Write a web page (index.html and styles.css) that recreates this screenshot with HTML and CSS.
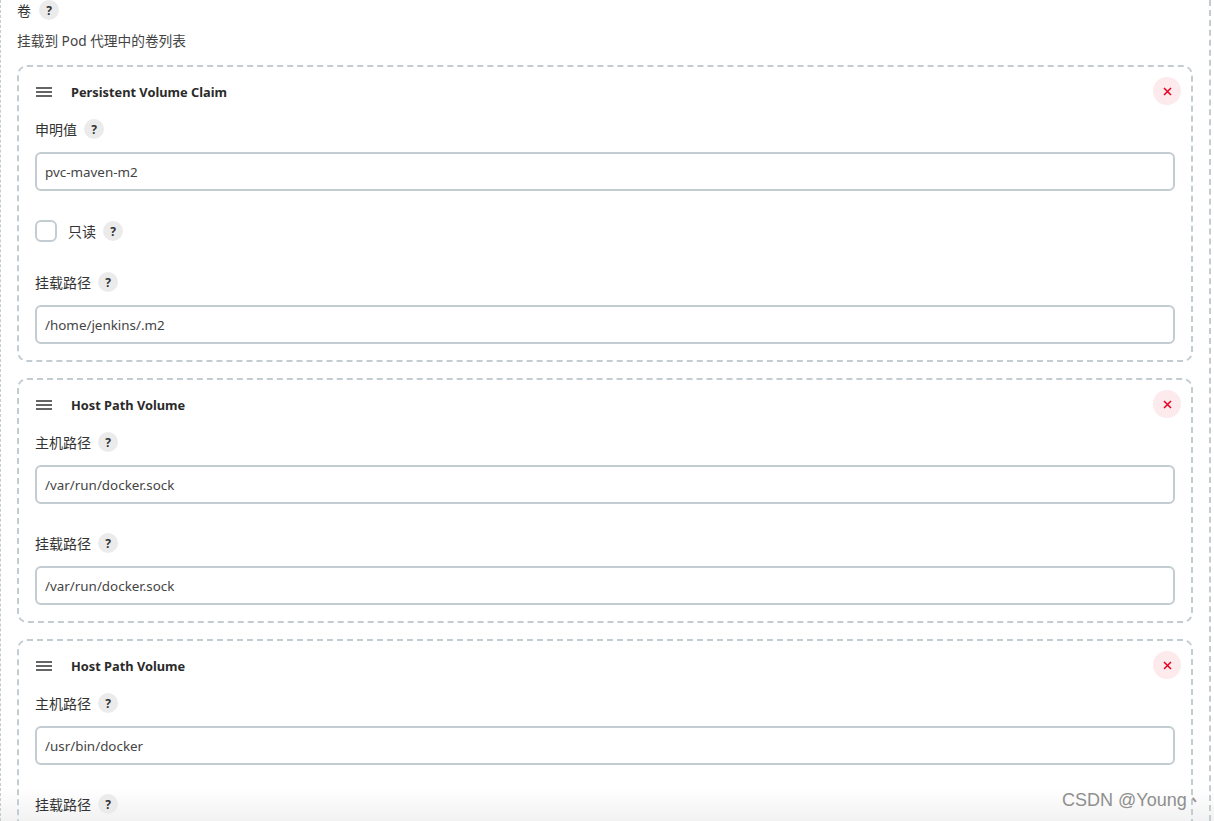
FILE: index.html
```html
<!DOCTYPE html>
<html>

<head>
    <meta charset="UTF-8">
    <title>卷</title>
    <link rel="stylesheet" href="styles.css">
</head>

<body>
    <div class="fade"></div>
    <div class="outer">
        <div class="label top_label">卷 <span class="help">?</span></div>
        <div class="desc">挂载到 Pod 代理中的卷列表</div>

        <div class="card">
            <div class="card_head">
                <svg class="grip" width="16" height="10" viewBox="0 0 16 10"><path d="M0 1h16M0 5h16M0 9h16" stroke="#333" stroke-width="1.4" fill="none"/></svg>
                <b>Persistent Volume Claim</b>
                <span class="close"><svg width="9" height="9" viewBox="0 0 9 9"><path d="M1 1l7 7M8 1l-7 7" stroke="#e6001f" stroke-width="1.5" fill="none"/></svg></span>
            </div>
            <div class="label">申明值 <span class="help">?</span></div>
            <div class="input">pvc-maven-m2</div>
            <div class="check_row">
                <span class="checkbox"></span>
                <span class="check_text">只读</span>
                <span class="help">?</span>
            </div>
            <div class="label">挂载路径 <span class="help">?</span></div>
            <div class="input">/home/jenkins/.m2</div>
        </div>

        <div class="card">
            <div class="card_head">
                <svg class="grip" width="16" height="10" viewBox="0 0 16 10"><path d="M0 1h16M0 5h16M0 9h16" stroke="#333" stroke-width="1.4" fill="none"/></svg>
                <b>Host Path Volume</b>
                <span class="close"><svg width="9" height="9" viewBox="0 0 9 9"><path d="M1 1l7 7M8 1l-7 7" stroke="#e6001f" stroke-width="1.5" fill="none"/></svg></span>
            </div>
            <div class="label">主机路径 <span class="help">?</span></div>
            <div class="input">/var/run/docker.sock</div>
            <div class="label next">挂载路径 <span class="help">?</span></div>
            <div class="input">/var/run/docker.sock</div>
        </div>

        <div class="card">
            <div class="card_head">
                <svg class="grip" width="16" height="10" viewBox="0 0 16 10"><path d="M0 1h16M0 5h16M0 9h16" stroke="#333" stroke-width="1.4" fill="none"/></svg>
                <b>Host Path Volume</b>
                <span class="close"><svg width="9" height="9" viewBox="0 0 9 9"><path d="M1 1l7 7M8 1l-7 7" stroke="#e6001f" stroke-width="1.5" fill="none"/></svg></span>
            </div>
            <div class="label">主机路径 <span class="help">?</span></div>
            <div class="input">/usr/bin/docker</div>
            <div class="label next">挂载路径 <span class="help">?</span></div>
        </div>
    </div>
    <div class="mark">CSDN @Young<span class="mark_tick"></span></div>
</body>

</html>
```

FILE: styles.css
```css
* {
    margin: 0;
    padding: 0;
    box-sizing: border-box;
}

html,
body {
    width: 100%;
    height: 821px;
    overflow: hidden;
    background: white;
}

body {
    position: relative;
    font-family: "Noto Sans", "Noto Sans CJK SC", sans-serif;
    font-size: 14px;
    color: #333;
}

.outer {
    position: relative;
    width: 1211px;
    height: 821px;
    overflow: hidden;
    padding: 0 17px 0 17px;
    border-left: 1px dashed #c3ccd1;
    border-right: 2px dashed #c3ccd1;
}

.label {
    display: flex;
    align-items: center;
    gap: 7px;
    height: 20px;
    margin-bottom: 13px;
}

.top_label {
    margin-left: -1px;
    margin-bottom: 12px;
    gap: 8px;
}

.desc {
    margin-left: -1px;
    height: 20px;
    line-height: 18px;
    margin-bottom: 13px;
    font-size: 13.7px;
    color: #444;
}

.help {
    display: inline-flex;
    align-items: center;
    justify-content: center;
    width: 20px;
    height: 20px;
    border-radius: 50%;
    background: #ebebeb;
    font-size: 12px;
    font-weight: bold;
    color: #333;
}

.card {
    width: 1176px;
    margin-left: -1px;
    margin-bottom: 16px;
    padding: 0 16px 16px 16px;
    border: 2px dashed #c3ccd1;
    border-radius: 10px;
}

.card_head {
    display: flex;
    align-items: center;
    height: 50px;
    margin-bottom: 2px;
    position: relative;
}

.card_head b {
    margin-left: 19px;
    font-size: 12.8px;
    color: #2a2a2a;
}

.grip {
    flex: none;
    margin-left: 1px;
}

.close {
    position: absolute;
    right: -6px;
    top: 10px;
    width: 28px;
    height: 28px;
    border-radius: 50%;
    background: #fdeaec;
    display: flex;
    align-items: center;
    justify-content: center;
}

.input {
    height: 39px;
    line-height: 37px;
    padding: 0 8px;
    border: 2px solid #c3ccd1;
    border-radius: 6px;
    font-size: 13.4px;
    color: #444;
}

.check_row {
    display: flex;
    align-items: center;
    height: 22px;
    margin-top: 29px;
    margin-bottom: 30px;
}

.checkbox {
    width: 22px;
    height: 22px;
    border: 2px solid #c3ccd1;
    border-radius: 6px;
}

.check_text {
    margin-left: 11px;
    margin-right: 7px;
}

.next {
    margin-top: 29px;
}

.fade {
    position: absolute;
    left: 0;
    right: 0;
    bottom: 0;
    height: 32px;
    background: linear-gradient(rgba(240, 240, 240, 0), rgba(240, 240, 240, 0.9));
}

.mark {
    position: absolute;
    left: 1062px;
    top: 790px;
    font-family: "Liberation Sans", sans-serif;
    font-size: 18px;
    color: #8f8f8f;
    white-space: nowrap;
}

.mark_tick {
    position: absolute;
    left: 130px;
    top: 9px;
    width: 5px;
    height: 1.5px;
    background: #999;
    transform: rotate(50deg);
}
```
